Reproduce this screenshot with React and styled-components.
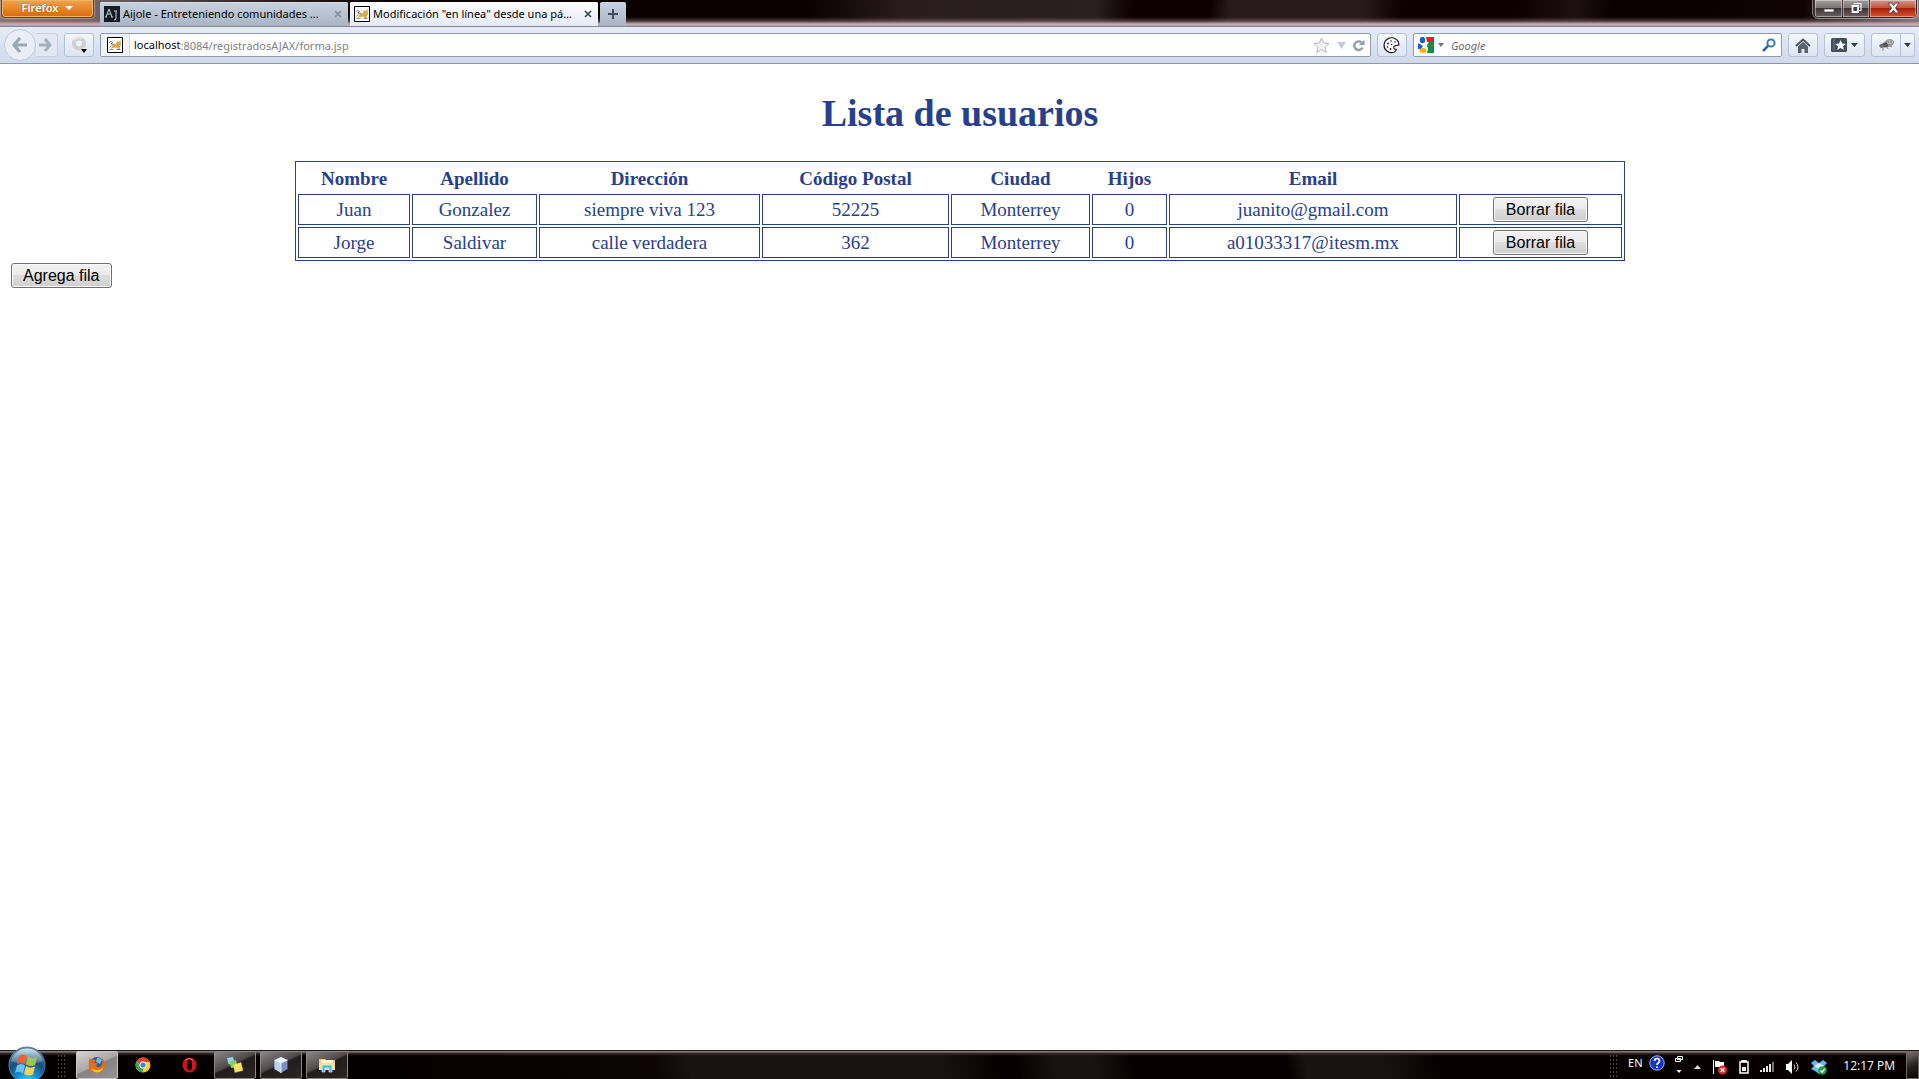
import React, { useState } from "react";
import styled, { createGlobalStyle, css } from "styled-components";

const NAVY = "#27408b";
const UI_FONT = '"Noto Sans", "Open Sans", sans-serif';

const GlobalStyle = createGlobalStyle`
  *, *::before, *::after { box-sizing: border-box; }
  body { margin: 0; background: #fff; overflow: hidden; }
  button, input { font: inherit; }
  svg { display: block; flex: none; }
`;

const Screen = styled.div`
  min-height: 100vh;
  display: flex;
  flex-direction: column;
  font-family: ${UI_FONT};
  font-size: 11px;
`;

/* ---------- title bar ---------- */

const TitleBar = styled.header`
  height: 26px;
  display: flex;
  align-items: flex-start;
  background:
    linear-gradient(180deg, transparent 17px, rgba(120, 100, 104, 0.55) 21px, #c3adb4 24px, #b8a4ab 26px),
    linear-gradient(90deg, #8a7d80 0, #6b5e61 110px, #30201f 260px, transparent 400px),
    linear-gradient(90deg, transparent 94%, #8e8486 100%),
    linear-gradient(96deg, #0b0000 0 42%, #281c1d 47%, #2b2021 57%, #0c0000 59% 63%, #261a1b 64% 71%, #0d0000 73% 79%, #1d1011 82%, #0a0000 84%, #120506 100%);
`;

const FirefoxButton = styled.button`
  width: 93px;
  height: 18px;
  margin-left: 1px;
  padding: 0 0 1px;
  display: flex;
  align-items: center;
  justify-content: center;
  gap: 7px;
  border: 1px solid #7b3a08;
  border-top: 0;
  border-radius: 0 0 4px 4px;
  color: #fff;
  font-weight: 600;
  line-height: 14px;
  text-shadow: 0 0 2px #a04a00;
  background: linear-gradient(180deg, #f0a451, #e98a2b 45%, #d9690c);
  box-shadow: inset 0 0 0 1px #f4b264, 0 0 2px #fff;
`;

const TabStrip = styled.nav`
  display: flex;
  align-items: flex-end;
  gap: 2px;
  height: 26px;
  margin-left: 6px;
`;

const Tab = styled.div`
  display: flex;
  align-items: center;
  width: 248px;
  height: 24px;
  padding: 0 4px 0 4px;
  border-radius: 2px 2px 0 0;
  background: ${(p) => (p.$active ? "linear-gradient(180deg, #fdfdff, #e4eaf5)" : "linear-gradient(180deg, #c9d2df, #a9b4c4)")};
  box-shadow: inset 0 1px 0 ${(p) => (p.$active ? "#fff" : "#d5dce6")};
`;

const TabLabel = styled.button`
  flex: 1;
  display: flex;
  align-items: center;
  gap: 3px;
  padding: 0;
  border: 0;
  background: none;
  color: #000;
  white-space: nowrap;
  line-height: 16px;
  text-align: left;
`;

const TabClose = styled.button`
  width: 12px;
  height: 16px;
  padding: 0;
  border: 0;
  display: grid;
  place-items: center;
  background: none;
  color: ${(p) => (p.$active ? "#3f474f" : "#858d98")};
`;

const NewTab = styled.button`
  width: 26px;
  height: 24px;
  padding: 0;
  border: 0;
  display: grid;
  place-items: center;
  border-radius: 2px 2px 0 0;
  background: linear-gradient(180deg, #c9d2df, #a9b4c4);
`;

const WindowControls = styled.div`
  display: flex;
  height: 18px;
  margin: 0 2px 0 auto;
  border: 1px solid #2e2526;
  border-top: 0;
  border-radius: 0 0 5px 5px;
  overflow: hidden;
  outline: 1px solid rgba(255, 255, 255, 0.45);
`;

const WindowButton = styled.button`
  width: ${(p) => p.$width}px;
  padding: 0 0 2px;
  border: 0;
  border-left: 1px solid #40383a;
  display: grid;
  place-items: center;
  box-shadow: inset 0 0 0 1px rgba(255, 255, 255, 0.4);
  background: ${(p) =>
    p.$close
      ? "linear-gradient(180deg, #d59a8e, #c4543f 45%, #ab1e08 50%, #d8552f)"
      : "linear-gradient(180deg, #a59c9e, #7d7476 45%, #3d3335 50%, #6d6365)"};
`;

/* ---------- navigation bar ---------- */

const NavBar = styled.div`
  height: 38px;
  display: flex;
  align-items: center;
  gap: 6px;
  padding: 0 4px;
  border-top: 1px solid #86888f;
  border-bottom: 1px solid #8e97a6;
  background: linear-gradient(180deg, #e6ecf6, #cfdaec);
`;

const HistoryButtons = styled.div`
  display: flex;
  align-items: center;
`;

const RoundButton = styled.button`
  width: 32px;
  height: 32px;
  padding: 0 2px 0 0;
  display: grid;
  place-items: center;
  border: 1px solid #c1cddc;
  border-radius: 50%;
  background: #e9eef7;
`;

const ToolButton = styled.button`
  width: ${(p) => p.$width || 30}px;
  height: 24px;
  padding: 0;
  display: flex;
  flex: none;
  align-items: center;
  justify-content: center;
  gap: 4px;
  border: 1px solid #b3c2d6;
  border-radius: 3px;
  background: linear-gradient(180deg, #f4f7fc, #dde5f2);
  ${(p) =>
    p.$joined === "left" &&
    css`
      border-radius: 3px 0 0 3px;
    `}
  ${(p) =>
    p.$joined === "right" &&
    css`
      border-left: 0;
      border-radius: 0 3px 3px 0;
    `}
`;

const ForwardButton = styled(ToolButton)`
  padding-right: 2px;
  border-left: 0;
  border-radius: 0 3px 3px 0;
  border-color: #c7d2e1;
  background: #e2e9f4;
`;

const ButtonGroup = styled.div`
  display: flex;
`;

const Field = styled.form`
  display: flex;
  align-items: center;
  height: 24px;
  min-width: 0;
  border: 1px solid #8f99a8;
  border-radius: 2px;
  background: #fff;
  flex: ${(p) => p.$grow} 1 0;
`;

const SiteIdentity = styled.button`
  width: 29px;
  height: 22px;
  padding: 0;
  border: 0;
  border-right: 1px solid #d3d6da;
  display: grid;
  place-items: center;
  background: #f1f2f4;
`;

const Host = styled.label`
  margin-left: 4px;
  color: #000;
  line-height: 16px;
`;

const TextInput = styled.input`
  flex: 1;
  min-width: 0;
  height: 20px;
  padding: 0;
  border: 0;
  outline: 0;
  background: none;
  color: #808080;
  &::placeholder {
    color: #6d6d6d;
    opacity: 1;
    font-style: italic;
  }
`;

const PlainButton = styled.button`
  padding: 0;
  border: 0;
  background: none;
  display: flex;
  align-items: center;
  gap: ${(p) => p.$gap || 0}px;
  margin-left: ${(p) => p.$before || 0}px;
  margin-right: ${(p) => p.$after || 0}px;
`;

/* ---------- document ---------- */

const Page = styled.main`
  flex: 1;
  padding: 0 9px 0 10px;
  font-family: "Liberation Serif", serif;
  font-size: 19px;
  color: ${NAVY};
`;

const Title = styled.h1`
  margin: 27px 0 26px;
  font-size: 38px;
  line-height: 44px;
  text-align: center;
`;

const UserTable = styled.table`
  width: 70%;
  margin: 0 auto;
  table-layout: fixed;
  border: 1px solid ${NAVY};
  border-collapse: separate;
  border-spacing: 2px;
  text-align: center;
`;

const Column = styled.col`
  width: ${(p) => (p.$share * 100) / 1310}%;
`;

const HeadCell = styled.th`
  height: 28px;
  padding: 2px 0 0;
  line-height: 22px;
`;

const Cell = styled.td`
  height: 31px;
  padding: 0;
  border: 1px solid ${NAVY};
  line-height: 22px;
`;

const FormButton = styled.button`
  display: block;
  height: 25px;
  margin: ${(p) => (p.$inCell ? "0 auto" : "2px 1px")};
  padding: 0 ${(p) => (p.$inCell ? 12 : 11)}px;
  border: 1px solid #707070;
  border-radius: 3px;
  box-shadow: inset 0 0 0 1px #fbfbfb;
  background: linear-gradient(180deg, #f2f2f2 0, #ebebeb 50%, #dddddd 50%, #cfcfcf 100%);
  color: #000;
  font-family: "Liberation Sans", sans-serif;
  font-size: 16px;
  line-height: 20px;
`;

/* ---------- task bar ---------- */

const TaskBar = styled.footer`
  height: 29px;
  display: flex;
  align-items: center;
  color: #fff;
  border-top: 1px solid #1c1718;
  background:
    linear-gradient(180deg, #82797b 0 1px, #3a3032 2px, transparent 5px),
    linear-gradient(80deg, #050000 0 20%, #0d0304 34%, #1a1112 36% 49%, #080000 52% 53%, #1a1112 55% 57%, #080000 59% 67%, #1a1112 68% 72%, #080000 75%, #050000 100%);
`;

const StartButton = styled.button`
  width: 38px;
  height: 38px;
  margin: 0 11px 0 8px;
  padding: 0;
  border: 0;
  background: none;
`;

const Grip = styled.span`
  width: 8px;
  height: 23px;
  background: radial-gradient(circle, #777 0 1px, transparent 1px) 0 0 / 3px 4px;
  opacity: 0.6;
`;

const TaskList = styled.nav`
  display: flex;
  gap: 4px;
  margin-left: 11px;
`;

const TaskButton = styled.button`
  width: 42px;
  height: 28px;
  padding: 0;
  display: grid;
  place-items: center;
  border: 1px solid transparent;
  border-radius: 2px;
  background: none;
  ${(p) =>
    p.$open &&
    css`
      border-color: #8a8486;
      background: linear-gradient(155deg, #8c8788 0, #4e4849 45%, #231c1d 50%, #2c2526 100%);
    `}
  ${(p) =>
    p.$active &&
    css`
      border-color: #c9c6c7;
      background: linear-gradient(155deg, #d6d4d4 0, #aaa6a7 48%, #868283 52%, #989495 100%);
    `}
`;

const Tray = styled.div`
  display: flex;
  align-items: center;
  align-self: stretch;
  margin-left: auto;
`;

const LanguageBar = styled.div`
  display: flex;
  align-items: center;
  gap: 6px;
  margin: 0 10px 4px;
`;

const Language = styled.button`
  width: 16px;
  height: 20px;
  padding: 0;
  border: 0;
  background: none;
  color: #fff;
  line-height: 16px;
`;

const TrayIcons = styled.div`
  display: flex;
  align-items: center;
  gap: 11px;
`;

const StatusIcon = styled.span`
  margin-top: ${(p) => (p.$raised ? 0 : 4)}px;
`;

const Clock = styled.time`
  margin: 2px 11px 0 16px;
  font-family: "Open Sans", sans-serif;
  font-size: 12px;
  line-height: 16px;
  white-space: nowrap;
`;

const ShowDesktop = styled.button`
  align-self: stretch;
  width: 13px;
  padding: 0;
  border: 1px solid #6d6768;
  background: linear-gradient(160deg, #777172, #241c1d 55%, #0c0405);
`;

/* ---------- drawings ---------- */

const Caret = ({ color = "#333d44", width = 7 }) => (
  <svg width={width} height="4" viewBox="0 0 8 4" preserveAspectRatio="none"><path d="M0 0h8L4 4z" fill={color} /></svg>
);

const CatIcon = () => (
  <svg width="16" height="16" viewBox="0 0 16 16">
    <path d="M.5.5h15v15H.5z" fill="#fff" stroke="#000" />
    <path d="M6 7.500l3-.5 1-3 1.500 1.200L13.500 3l.5 4-1.500 2 .5 3H11l-1.500-1.500L6 11l-2.500 1z" fill="#dba94a" />
    <path d="M2 5.500l2-1 1.500 1L4 7l3 .5M2.500 10.500l2-2M2.500 12.500h4M9.500 12.500h4" stroke="#8a7a66" strokeWidth=".9" fill="none" />
    <path d="M4 6.500l1.500-.5M12.500 9.500l1-1" stroke="#4d535b" fill="none" />
  </svg>
);

const AijoleIcon = () => (
  <svg width="16" height="16" viewBox="0 0 16 16">
    <path fill="#171b24" d="M0 0h16v16H0z" />
    <path d="M2 11L5 3l3 8M3 8h4M1 11h2M7 11h2M10 5h3M12 5v7q0 2-2 2" stroke="#c9ccd1" fill="none" />
  </svg>
);

const CloseMark = () => (
  <svg width="8" height="8" viewBox="0 0 8 8"><path d="M1 1l6 6M7 1L1 7" stroke="currentColor" strokeWidth="1.7" /></svg>
);

const PlusMark = () => (
  <svg width="10" height="10" viewBox="0 0 10 10"><path d="M5 0v10M0 5h10" stroke="#3f4c5a" strokeWidth="2" /></svg>
);

const BackArrow = () => (
  <svg width="17" height="16" viewBox="0 0 17 16"><path d="M9 1L3 8l6 7M3 8h13" fill="none" stroke="#9ba8b4" strokeWidth="3.2" /></svg>
);

const ForwardArrow = () => (
  <svg width="13" height="14" viewBox="0 0 13 14"><path d="M6 1l5 6-5 6M11 7H0" fill="none" stroke="#a3b0bd" strokeWidth="3" /></svg>
);

const RingIcon = () => (
  <svg width="17" height="18" viewBox="0 0 17 18">
    <circle cx="8" cy="7.500" r="5" fill="#eef1f6" stroke="#cfd0d1" strokeWidth="4" />
    <path d="M3 4a6 6 0 0 1 8-2" fill="none" stroke="#e9e9e9" strokeWidth="2" />
    <path d="M10 13h6l-3 4z" fill="#000" />
  </svg>
);

const StarIcon = () => (
  <svg width="17" height="17" viewBox="0 0 17 17">
    <path d="M8.500 1l2.200 5 5.300.5-4 3.600 1.300 5.400-4.800-2.900-4.800 2.900L5 10.100 1 6.500 6.300 6z" fill="#f4f4f4" stroke="#b5b5b5" />
  </svg>
);

const ReloadIcon = () => (
  <svg width="12" height="13" viewBox="0 0 12 13">
    <path d="M9.500 8.500A4.300 4.300 0 1 1 8.500 3.500" fill="none" stroke="#929da8" strokeWidth="2.400" />
    <path d="M6 6h5.500V.5z" fill="#929da8" />
  </svg>
);

const CookieIcon = () => (
  <svg width="17" height="17" viewBox="0 0 17 17">
    <path d="M12.500 2A7.400 7.400 0 1 0 11.500 15q1.500-1 1.800-2.500-2.300.2-2.600-1.600-.2-1.800 1.600-2.300l3.500-.5Q16 3.500 12.500 2z" fill="#fff" stroke="#1d1d1d" strokeWidth="1.200" />
    <g fill="#1d1d1d"><circle cx="8" cy="4" r=".8" /><circle cx="5" cy="6.500" r=".9" /><circle cx="8.500" cy="7.500" r=".8" /><circle cx="4.500" cy="10" r=".8" /><circle cx="7.500" cy="12" r=".9" /><circle cx="12" cy="5" r=".8" /></g>
  </svg>
);

const GoogleIcon = () => (
  <svg width="16" height="16" viewBox="0 0 16 16">
    <path fill="#fff" d="M0 0h16v16H0z" />
    <path d="M8 0h8v5H9z" fill="#e61e25" />
    <path d="M11 5h5v11H9l1-4-1-4z" fill="#079247" />
    <ellipse cx="4.500" cy="3" rx="2.700" ry="3.200" fill="#1a5fc8" />
    <path d="M0 6l5 3-2 3H0z" fill="#1a5fc8" />
    <ellipse cx="5" cy="13.500" rx="3.600" ry="2.500" fill="#f2b01e" />
  </svg>
);

const SearchIcon = () => (
  <svg width="14" height="14" viewBox="0 0 14 14">
    <circle cx="9" cy="5" r="3.600" fill="none" stroke="#3a7cba" strokeWidth="2" />
    <path d="M6.300 7.700L1 13" stroke="#2d67a8" strokeWidth="2.500" />
  </svg>
);

const HomeIcon = () => (
  <svg width="16" height="15" viewBox="0 0 16 15">
    <path d="M1 8l7-6.500L15 8" fill="none" stroke="#46525e" strokeWidth="2" />
    <path d="M3 8.500l5-4.700 5 4.700V15H9.500v-4h-3v4H3z" fill="#56636f" />
  </svg>
);

const BookmarksIcon = () => (
  <svg width="16" height="14" viewBox="0 0 16 14">
    <rect width="16" height="14" rx="1.500" fill="#414e5a" />
    <path d="M3 1v12" stroke="#6d7a86" />
    <path d="M9.500 2l1.600 3.500 3.700.4-2.800 2.400.9 3.700-3.400-2L6.200 12l.9-3.700-2.800-2.400 3.700-.4z" fill="#fff" />
  </svg>
);

const FlyIcon = () => (
  <svg width="17" height="14" viewBox="0 0 17 14">
    <ellipse cx="11" cy="5" rx="5" ry="3.800" transform="rotate(-20 11 5)" fill="#8f9295" />
    <ellipse cx="7" cy="7" rx="3" ry="2.500" fill="#55585a" />
    <circle cx="3.500" cy="8" r="2" fill="#6d7072" />
    <path d="M2 7l-1 1M5 9l0 4M9 9l1 2M12 8l2 1" stroke="#888" fill="none" />
    <ellipse cx="12" cy="4" rx="3" ry="2" fill="#bcbfc1" />
    <path d="M10 3l1 2M13 2l0 3" stroke="#777" strokeWidth=".8" />
  </svg>
);

const MinimizeMark = () => (
  <svg width="12" height="12" viewBox="0 0 12 12"><path d="M1 7h10v3H1z" fill="#fff" stroke="#4a4a5c" strokeWidth=".8" /></svg>
);

const RestoreMark = () => (
  <svg width="12" height="12" viewBox="0 0 12 12">
    <path d="M4 1.500h7v7H9" fill="none" stroke="#fff" strokeWidth="1.200" />
    <path d="M2.500 4h5.500v6h-5.500z" fill="#444157" stroke="#fff" strokeWidth="1.800" />
  </svg>
);

const WindowCloseMark = () => (
  <svg width="13" height="12" viewBox="0 0 13 12">
    <path d="M1 1h3.500l2 2.500L8.500 1H12L8.500 6l3.500 5H8.500l-2-2.800L4.500 11H1l3.500-5z" fill="#fff" stroke="#56474e" />
  </svg>
);

const StartOrb = () => (
  <svg width="38" height="38" viewBox="0 0 38 38">
    <defs>
      <radialGradient id="orb" cx="50%" cy="100%" r="95%">
        <stop offset="0" stopColor="#35e4ff" /><stop offset=".3" stopColor="#1599dc" /><stop offset=".65" stopColor="#174f7f" /><stop offset="1" stopColor="#5c84a1" />
      </radialGradient>
      <linearGradient id="orbGloss" x2="0" y2="1"><stop offset="0" stopColor="#d7e6ef" /><stop offset="1" stopColor="#6b93ae" stopOpacity=".45" /></linearGradient>
    </defs>
    <circle cx="19" cy="19" r="18" fill="url(#orb)" stroke="#5b7c91" />
    <path d="M3 15a16.500 16.500 0 0 1 32 0q-16 7-32 0z" fill="url(#orbGloss)" />
    <path d="M11 10q4-3 8 0l-2 8q-4-3-8 0z" fill="#ee6234" />
    <path d="M20 10.500q4 3 9 .5l-2 8q-5 2-9-.5z" fill="#9cc94d" />
    <path d="M9 19.500q4-3 8 0l-2 8q-4-3-8-.5z" fill="#6cc1ee" />
    <path d="M18 20q4 3 9 .5l-2 8q-5 2-9-.5z" fill="#fbd04c" />
  </svg>
);

const FirefoxIcon = () => (
  <svg width="18" height="18" viewBox="0 0 18 18">
    <circle cx="9" cy="8.500" r="7.500" fill="#285da8" />
    <path d="M9 2q3-1 5 2l-2 4-4-2z" fill="#6eb8e8" />
    <path d="M2 1.500q0 2 1.500 2.200Q6 3 8 4.500L6 6.500l3.500 1-1.500 2.700q3 2 5.500-.7Q15 7 14 2.500q4 3 3 7.500-2 7-8 7-7.500 0-8.200-7Q0 5 2 1.500z" fill="#e36f12" />
    <path d="M2.500 9q.5 4.500 5.500 5 5 .3 7.500-3-1.500 5.500-6.500 5.500T2.500 9z" fill="#f7bf37" />
  </svg>
);

const ChromeIcon = () => (
  <svg width="16" height="16" viewBox="0 0 16 16">
    <circle cx="8" cy="8" r="7.500" fill="#f8cd2f" />
    <path d="M1.500 4.200A7.500 7.500 0 0 1 14.800 5H8a3 3 0 0 0-3 3z" fill="#dd4132" />
    <path d="M1.500 4.200L5.400 10q1.200 1.500 3.600 1l-2 4.400A7.500 7.500 0 0 1 1.500 4.200z" fill="#37a24d" />
    <circle cx="8" cy="8" r="3.500" fill="#fff" /><circle cx="8" cy="8" r="2.600" fill="#3e82d4" />
  </svg>
);

const OperaIcon = () => (
  <svg width="15" height="16" viewBox="0 0 15 16">
    <path fillRule="evenodd" d="M7.500.5a7 7.500 0 1 0 .01 0zM7.500 2.500c2 0 2.500 2.500 2.500 5.500s-.5 5.500-2.500 5.500S5 11 5 8s.5-5.500 2.500-5.500z" fill="#d4121b" />
    <path d="M3 3q4-3 8 0" stroke="#f06a64" fill="none" />
  </svg>
);

const NotesIcon = () => (
  <svg width="18" height="18" viewBox="0 0 18 18">
    <path d="M1 2l6-1 1.500 6-6 1.500z" fill="#8fd8ee" />
    <path d="M3.500 5.500l6.500-1.500 1.500 7-6.500 1z" fill="#86d05c" />
    <path d="M7 8.500l8-2 2 8-8 2z" fill="#f7e26b" stroke="#cfb73d" strokeWidth=".5" />
  </svg>
);

const CubeIcon = () => (
  <svg width="16" height="18" viewBox="0 0 16 18">
    <path d="M8 1l6.500 3v9L8 17l-6.500-4V4z" fill="#7593c4" /><path d="M8 1l6.500 3L8 7 1.500 4z" fill="#e9f1fb" /><path d="M8 7v10l-6.500-4V4z" fill="#bad0ec" /><path d="M1.500 4L8 7l6.500-3M8 7v10" stroke="#fff" strokeWidth=".7" fill="none" />
  </svg>
);

const FolderIcon = () => (
  <svg width="18" height="16" viewBox="0 0 18 16">
    <path d="M1 2h6l1 1h9v10H1z" fill="#e9c869" /><path d="M3 3h12v8H3z" fill="#fff7cd" /><path d="M1 6h16v7H1z" fill="#f5df8e" />
    <path d="M4 15V9q0-1 1-1h8q1 0 1 1v6h-3v-4H7v4z" fill="#56b4e2" stroke="#d4effb" strokeWidth=".7" />
  </svg>
);

const HelpIcon = () => (
  <svg width="16" height="16" viewBox="0 0 16 16">
    <circle cx="8" cy="8" r="7.200" fill="#1533c4" stroke="#a9b7ec" />
    <path d="M5.500 6q0-2.500 2.500-2.500T10.500 6q0 1.200-1.300 2T8 10" stroke="#fff" strokeWidth="1.700" fill="none" /><circle cx="8" cy="12.200" r="1" fill="#fff" />
  </svg>
);

const LanguageOptionsIcon = () => (
  <svg width="8" height="18" viewBox="0 0 8 18">
    <path d="M2.500.5h5v3h-5zM.5 2.500h5v3h-5z" fill="#111" stroke="#fff" /><path d="M1.500 14h5L4 17z" fill="#fff" />
  </svg>
);

const HiddenIconsArrow = () => (
  <svg width="7" height="4" viewBox="0 0 7 4"><path d="M3.500 0L7 4H0z" fill="#ddd" /></svg>
);

const FlagIcon = () => (
  <svg width="16" height="16" viewBox="0 0 16 16">
    <path d="M1.500 1v14" stroke="#fff" /><path d="M3 2h4l1 1h4v6H8L7 8H3z" fill="#fff" />
    <circle cx="10.500" cy="11" r="4.500" fill="#dd2b21" /><path d="M8.700 9.200l3.600 3.600M12.300 9.200l-3.600 3.600" stroke="#fff" strokeWidth="1.400" />
  </svg>
);

const BatteryIcon = () => (
  <svg width="10" height="14" viewBox="0 0 10 14">
    <path d="M3 1.500V.5h4v1M1 2h8v11H1z" fill="none" stroke="#fff" strokeWidth="1.500" /><path d="M3 7h4v4H3z" fill="#fff" />
  </svg>
);

const SignalIcon = () => (
  <svg width="15" height="12" viewBox="0 0 15 12">
    <path d="M0 9h2v2H0zM3 7h2v4H3zM6 5h2v6H6zM9 3h2v8H9z" fill="#e8e8e8" /><path d="M12 1h2v10h-2z" fill="#777" />
  </svg>
);

const SpeakerIcon = () => (
  <svg width="14" height="14" viewBox="0 0 14 14">
    <path d="M0 4h2l4-4v14l-4-4H0z" fill="#fff" /><path d="M8 4.500q2 2.500 0 5M10 2.500q4 4.500 0 9" stroke="#ddd" fill="none" />
  </svg>
);

const DropboxIcon = () => (
  <svg width="16" height="16" viewBox="0 0 16 16">
    <path d="M4 1l4 3 4-3 4 3-3 3 3 3-4 2-4 3-4-3-4-2 3-3-3-3z" fill="#67b9ef" /><path d="M3 7l5-3 5 3-5 3z" fill="#d4edfb" />
    <circle cx="11.500" cy="11.500" r="4.200" fill="#269b3b" /><path d="M9.500 11.500l1.600 1.700 2.600-3.300" stroke="#fff" strokeWidth="1.300" fill="none" />
  </svg>
);

const HistoryCaret = () => (
  <svg width="9" height="7" viewBox="0 0 9 7"><path d="M0 0h9L4.500 7z" fill="#c3ccd8" /></svg>
);

/* ---------- data ---------- */

const COLUMNS = [
  { title: "Nombre", share: 112 },
  { title: "Apellido", share: 125 },
  { title: "Dirección", share: 221 },
  { title: "Código Postal", share: 187 },
  { title: "Ciudad", share: 139 },
  { title: "Hijos", share: 75 },
  { title: "Email", share: 288 },
  { title: "", share: 163 },
];

const INITIAL_USERS = [
  ["Juan", "Gonzalez", "siempre viva 123", "52225", "Monterrey", "0", "juanito@gmail.com"],
  ["Jorge", "Saldivar", "calle verdadera", "362", "Monterrey", "0", "a01033317@itesm.mx"],
];

const TASKS = [
  { name: "Firefox", Icon: FirefoxIcon, open: true, active: true },
  { name: "Chrome", Icon: ChromeIcon },
  { name: "Opera", Icon: OperaIcon },
  { name: "Notas", Icon: NotesIcon, open: true },
  { name: "NetBeans", Icon: CubeIcon, open: true },
  { name: "Explorador", Icon: FolderIcon, open: true },
];

const STATUS_ICONS = [HiddenIconsArrow, FlagIcon, BatteryIcon, SignalIcon, SpeakerIcon, DropboxIcon];

const hold = (event) => event.preventDefault();

function Browser() {
  const [url, setUrl] = useState(":8084/registradosAJAX/forma.jsp");
  return (
    <>
      <TitleBar>
        <FirefoxButton>Firefox <Caret color="#fff" width={8} /></FirefoxButton>
        <TabStrip>
          <Tab>
            <TabLabel><AijoleIcon />Aijole - Entreteniendo comunidades ...</TabLabel>
            <TabClose aria-label="Cerrar"><CloseMark /></TabClose>
          </Tab>
          <Tab $active>
            <TabLabel><CatIcon />Modificación "en línea" desde una pá...</TabLabel>
            <TabClose $active aria-label="Cerrar"><CloseMark /></TabClose>
          </Tab>
          <NewTab aria-label="Nueva"><PlusMark /></NewTab>
        </TabStrip>
        <WindowControls>
          <WindowButton $width={28} aria-label="Minimizar"><MinimizeMark /></WindowButton>
          <WindowButton $width={27} aria-label="Restaurar"><RestoreMark /></WindowButton>
          <WindowButton $width={47} $close aria-label="Cerrar"><WindowCloseMark /></WindowButton>
        </WindowControls>
      </TitleBar>
      <NavBar>
        <HistoryButtons>
          <RoundButton aria-label="Atrás"><BackArrow /></RoundButton>
          <ForwardButton $width={22} aria-label="Adelante"><ForwardArrow /></ForwardButton>
        </HistoryButtons>
        <ToolButton aria-label="Complemento"><RingIcon /></ToolButton>
        <Field $grow={1272} onSubmit={hold}>
          <SiteIdentity type="button" aria-label="Sitio"><CatIcon /></SiteIdentity>
          <Host htmlFor="url">localhost</Host>
          <TextInput id="url" value={url} onChange={(e) => setUrl(e.target.value)} />
          <PlainButton type="button" $after={7} aria-label="Marcar"><StarIcon /></PlainButton>
          <PlainButton type="button" $after={7} aria-label="Historial"><HistoryCaret /></PlainButton>
          <PlainButton type="button" $after={5} aria-label="Recargar"><ReloadIcon /></PlainButton>
        </Field>
        <ToolButton aria-label="Cookies"><CookieIcon /></ToolButton>
        <Field $grow={368} onSubmit={hold}>
          <PlainButton type="button" $gap={4} $before={4} $after={7} aria-label="Buscador">
            <GoogleIcon /><Caret color="#70757a" width={6} />
          </PlainButton>
          <TextInput aria-label="Buscar" placeholder="Google" />
          <PlainButton $after={5} aria-label="Ir"><SearchIcon /></PlainButton>
        </Field>
        <ToolButton aria-label="Inicio"><HomeIcon /></ToolButton>
        <ToolButton $width={41} aria-label="Marcadores"><BookmarksIcon /><Caret /></ToolButton>
        <ButtonGroup>
          <ToolButton $joined="left" aria-label="Firebug"><FlyIcon /></ToolButton>
          <ToolButton $width={14} $joined="right" aria-label="Opciones"><Caret /></ToolButton>
        </ButtonGroup>
      </NavBar>
    </>
  );
}

function Users() {
  const [users, setUsers] = useState(INITIAL_USERS);
  return (
    <Page>
      <Title>Lista de usuarios</Title>
      <UserTable>
        <colgroup>
          {COLUMNS.map((column, i) => <Column key={i} $share={column.share} />)}
        </colgroup>
        <thead>
          <tr>{COLUMNS.map((column, i) => <HeadCell key={i} as={column.title ? "th" : "td"}>{column.title}</HeadCell>)}</tr>
        </thead>
        <tbody>
          {users.map((user, row) => (
            <tr key={row}>
              {user.map((value, i) => <Cell key={i}>{value}</Cell>)}
              <Cell>
                <FormButton $inCell onClick={() => setUsers(users.filter((_, i) => i !== row))}>Borrar fila</FormButton>
              </Cell>
            </tr>
          ))}
        </tbody>
      </UserTable>
      <FormButton onClick={() => setUsers([...users, Array(7).fill("")])}>Agrega fila</FormButton>
    </Page>
  );
}

function Desktop() {
  return (
    <TaskBar>
      <StartButton aria-label="Inicio"><StartOrb /></StartButton>
      <Grip />
      <TaskList>
        {TASKS.map(({ name, Icon, open, active }) => (
          <TaskButton key={name} aria-label={name} $open={open} $active={active}><Icon /></TaskButton>
        ))}
      </TaskList>
      <Tray>
        <Grip />
        <LanguageBar>
          <Language>EN</Language>
          <HelpIcon />
        </LanguageBar>
        <TrayIcons>
          <StatusIcon $raised><LanguageOptionsIcon /></StatusIcon>
          {STATUS_ICONS.map((Icon, i) => <StatusIcon key={i}><Icon /></StatusIcon>)}
        </TrayIcons>
        <Clock>12:17 PM</Clock>
        <ShowDesktop aria-label="Escritorio" />
      </Tray>
    </TaskBar>
  );
}

export default function App() {
  return (
    <Screen>
      <GlobalStyle />
      <Browser />
      <Users />
      <Desktop />
    </Screen>
  );
}
